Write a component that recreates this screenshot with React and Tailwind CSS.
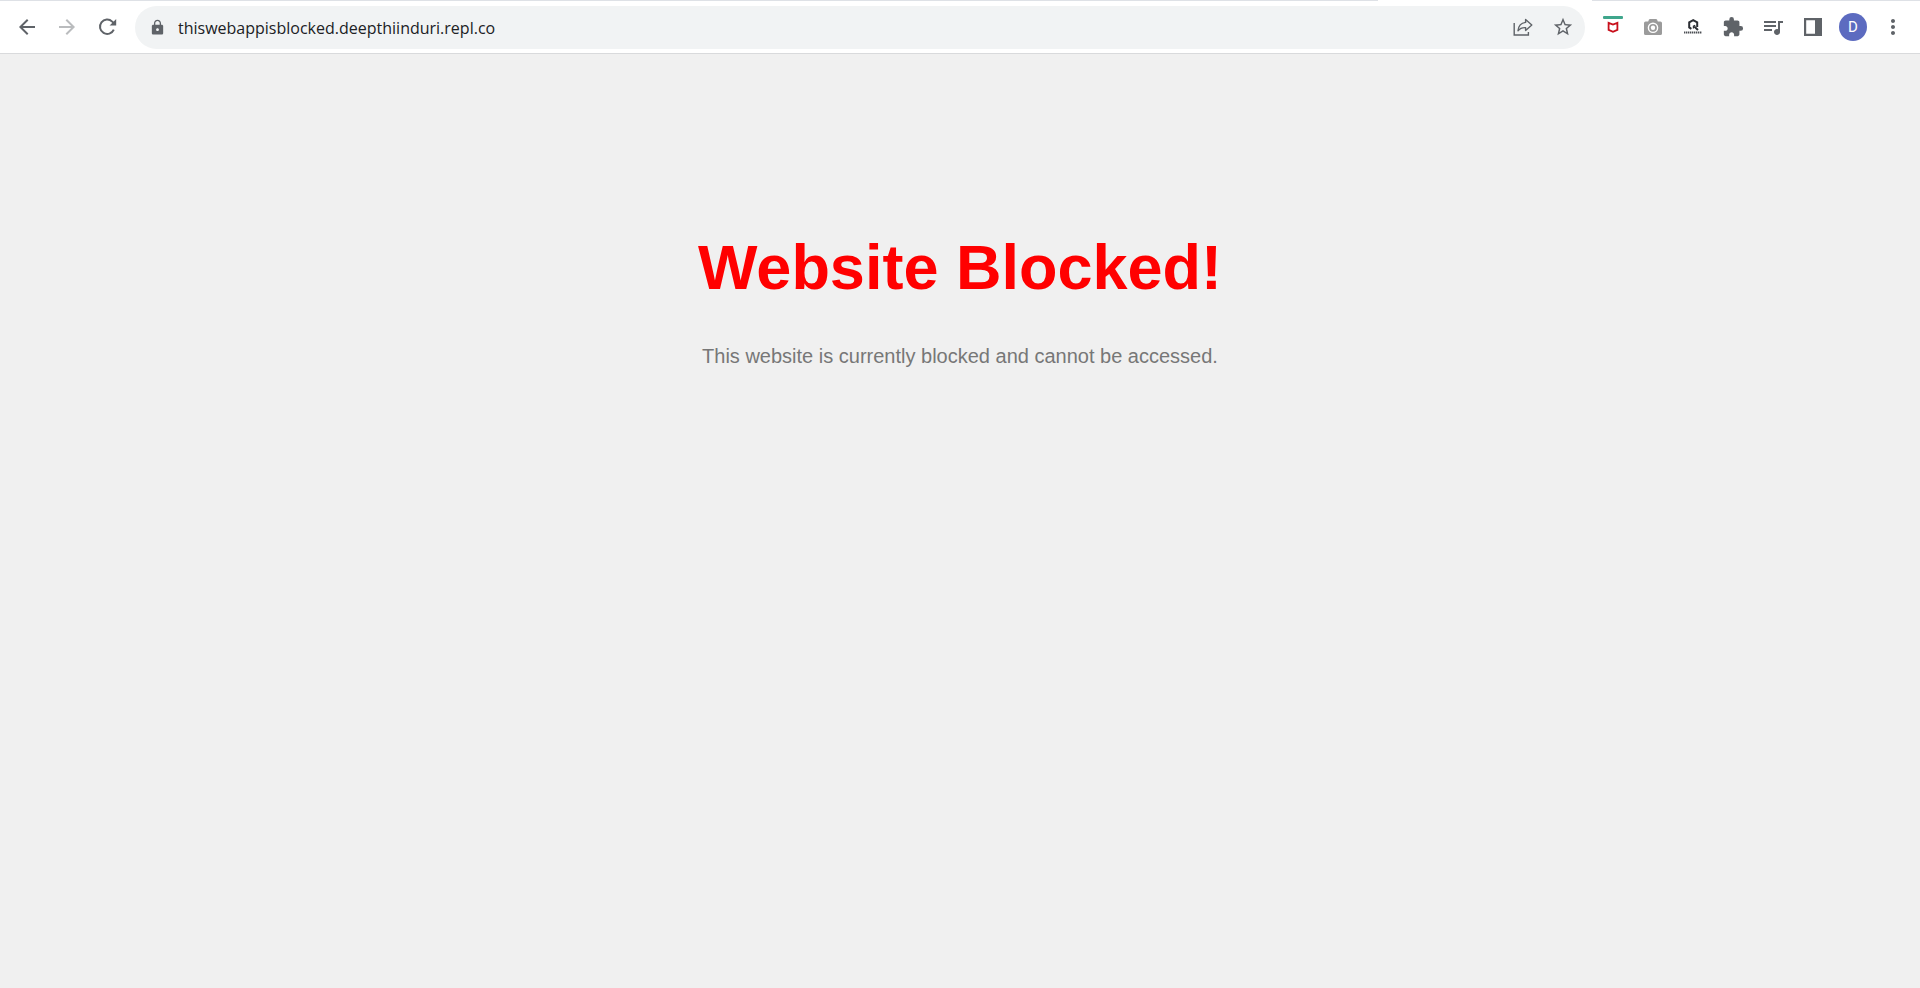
import {
  MdArrowBack,
  MdArrowForward,
  MdLock,
  MdStarOutline,
  MdExtension,
  MdQueueMusic,
  MdMoreVert,
} from "react-icons/md";

function ToolButton({ label, className = "text-[#5f6368]", children }) {
  return (
    <button
      type="button"
      aria-label={label}
      className={`flex h-10 w-10 shrink-0 items-center justify-center rounded-full ${className}`}
    >
      {children}
    </button>
  );
}

function ReloadIcon() {
  return (
    <svg width="24" height="24" viewBox="0 0 24 24" fill="none">
      <path d="M18.8 14.6A7.2 7.2 0 1 1 17.2 6.6L19 8.4" stroke="currentColor" strokeWidth="2" />
      <path d="M21.2 4V10.6H14.6Z" fill="currentColor" />
    </svg>
  );
}

function ShareIcon() {
  return (
    <svg width="24" height="24" viewBox="0 0 24 24" fill="none" stroke="currentColor">
      <path d="M3.2 8V20H17.4V17" strokeWidth="1.4" />
      <path
        d="M14.6 4.4L20.8 9.9L14.6 15.4V12.6C11.2 12.4 9 13.2 7 15.8C7.4 11.2 9.8 8 14.6 7.4Z"
        strokeWidth="1.4"
        strokeLinejoin="round"
      />
    </svg>
  );
}

function ShieldIcon() {
  return (
    <svg width="24" height="24" viewBox="0 0 24 24" fill="none">
      <rect x="2" y="1" width="20" height="3" rx="1" fill="#3fa68c" />
      <path d="M7.6 7.8L12 9.6L16.4 7.8V14.8L12 16.8L7.6 14.8Z" stroke="#c8101c" strokeWidth="1.8" />
    </svg>
  );
}

function CameraIcon() {
  return (
    <svg width="18" height="18" viewBox="0 0 18 18">
      <path
        fill="currentColor"
        d="M5 1.6Q5.3 1 6 1H12Q12.7 1 13 1.6L13.8 3.4H16.4Q18 3.4 18 5V15.4Q18 17 16.4 17H1.6Q0 17 0 15.4V5Q0 3.4 1.6 3.4H4.2Z"
      />
      <circle cx="9" cy="9.8" r="4.6" fill="none" stroke="#fff" strokeWidth="1.4" />
      <circle cx="9" cy="9.8" r="2.2" fill="#fff" />
    </svg>
  );
}

function HexagonIcon() {
  return (
    <svg width="24" height="24" viewBox="0 0 24 24" fill="none">
      <path d="M10.4 13.8L8.2 12.4V7.4L12.2 5.2L16.2 7.4V12" stroke="#2b2e33" strokeWidth="2" />
      <path d="M12.4 13.4V11.2L14.2 10.2" stroke="#2b2e33" strokeWidth="1.2" />
      <path d="M13.2 11.6L17 15" stroke="#2b2e33" strokeWidth="2" />
      <path d="M3 17.6H21" stroke="#4b4e53" strokeWidth="2" strokeDasharray="1.4 0.6" />
    </svg>
  );
}

function SidePanelIcon() {
  return (
    <svg width="18" height="18" viewBox="0 0 18 18">
      <path fill="currentColor" fillRule="evenodd" d="M0 0H18V18H0ZM2.2 2.2V15.8H11V2.2Z" />
    </svg>
  );
}

function BrowserToolbar() {
  return (
    <header className="border-b border-[#d9dadc] bg-white">
      <div className="flex h-px">
        <div className="flex-1 bg-[#dee1e6]" />
        <div className="w-[214px]" />
        <div className="w-[328px] bg-[#dee1e6]" />
      </div>
      <div className="flex h-[52px] items-center px-[7px]">
        <nav aria-label="Navigation" className="flex">
          <ToolButton label="Back">
            <MdArrowBack size={24} />
          </ToolButton>
          <ToolButton label="Forward" className="text-[#babcbe]">
            <MdArrowForward size={24} />
          </ToolButton>
          <ToolButton label="Reload">
            <ReloadIcon />
          </ToolButton>
        </nav>
        <div className="mx-2 flex h-[43px] min-w-0 flex-1 items-center rounded-full bg-[#f1f3f4] pr-0.5 pl-[14px]">
          <MdLock size={17} className="shrink-0 text-[#5f6368]" />
          <input
            type="text"
            aria-label="Address"
            defaultValue="thiswebappisblocked.deepthiinduri.repl.co"
            className="ml-3 h-7 min-w-0 flex-1 bg-transparent pt-0.5 font-['Open_Sans',sans-serif] text-[16px] text-[#202124] outline-none"
          />
          <ToolButton label="Share">
            <ShareIcon />
          </ToolButton>
          <ToolButton label="Bookmark">
            <MdStarOutline size={22} />
          </ToolButton>
        </div>
        <div className="flex">
          <ToolButton label="Web protection">
            <ShieldIcon />
          </ToolButton>
          <ToolButton label="Screenshot" className="text-[#9b9b9b]">
            <CameraIcon />
          </ToolButton>
          <ToolButton label="Search extension">
            <HexagonIcon />
          </ToolButton>
          <ToolButton label="Extensions">
            <MdExtension size={22} />
          </ToolButton>
          <ToolButton label="Media controls">
            <MdQueueMusic size={24} />
          </ToolButton>
          <ToolButton label="Side panel">
            <SidePanelIcon />
          </ToolButton>
          <ToolButton label="Profile">
            <span className="flex h-7 w-7 items-center justify-center rounded-full bg-[#5c6bc0] font-[Roboto,sans-serif] text-[15px] text-white">
              D
            </span>
          </ToolButton>
          <ToolButton label="Menu">
            <MdMoreVert size={24} />
          </ToolButton>
        </div>
      </div>
    </header>
  );
}

export default function App() {
  return (
    <div className="flex min-h-screen flex-col bg-[#f0f0f0] font-['Liberation_Sans',Arial,sans-serif]">
      <BrowserToolbar />
      <main className="px-4 pt-[177px] text-center">
        <h1 className="text-[63px] leading-[72px] font-bold text-[#ff0000]">Website Blocked!</h1>
        <p className="mt-[38px] text-[20px] leading-[30px] text-[#777777]">
          This website is currently blocked and cannot be accessed.
        </p>
      </main>
    </div>
  );
}
